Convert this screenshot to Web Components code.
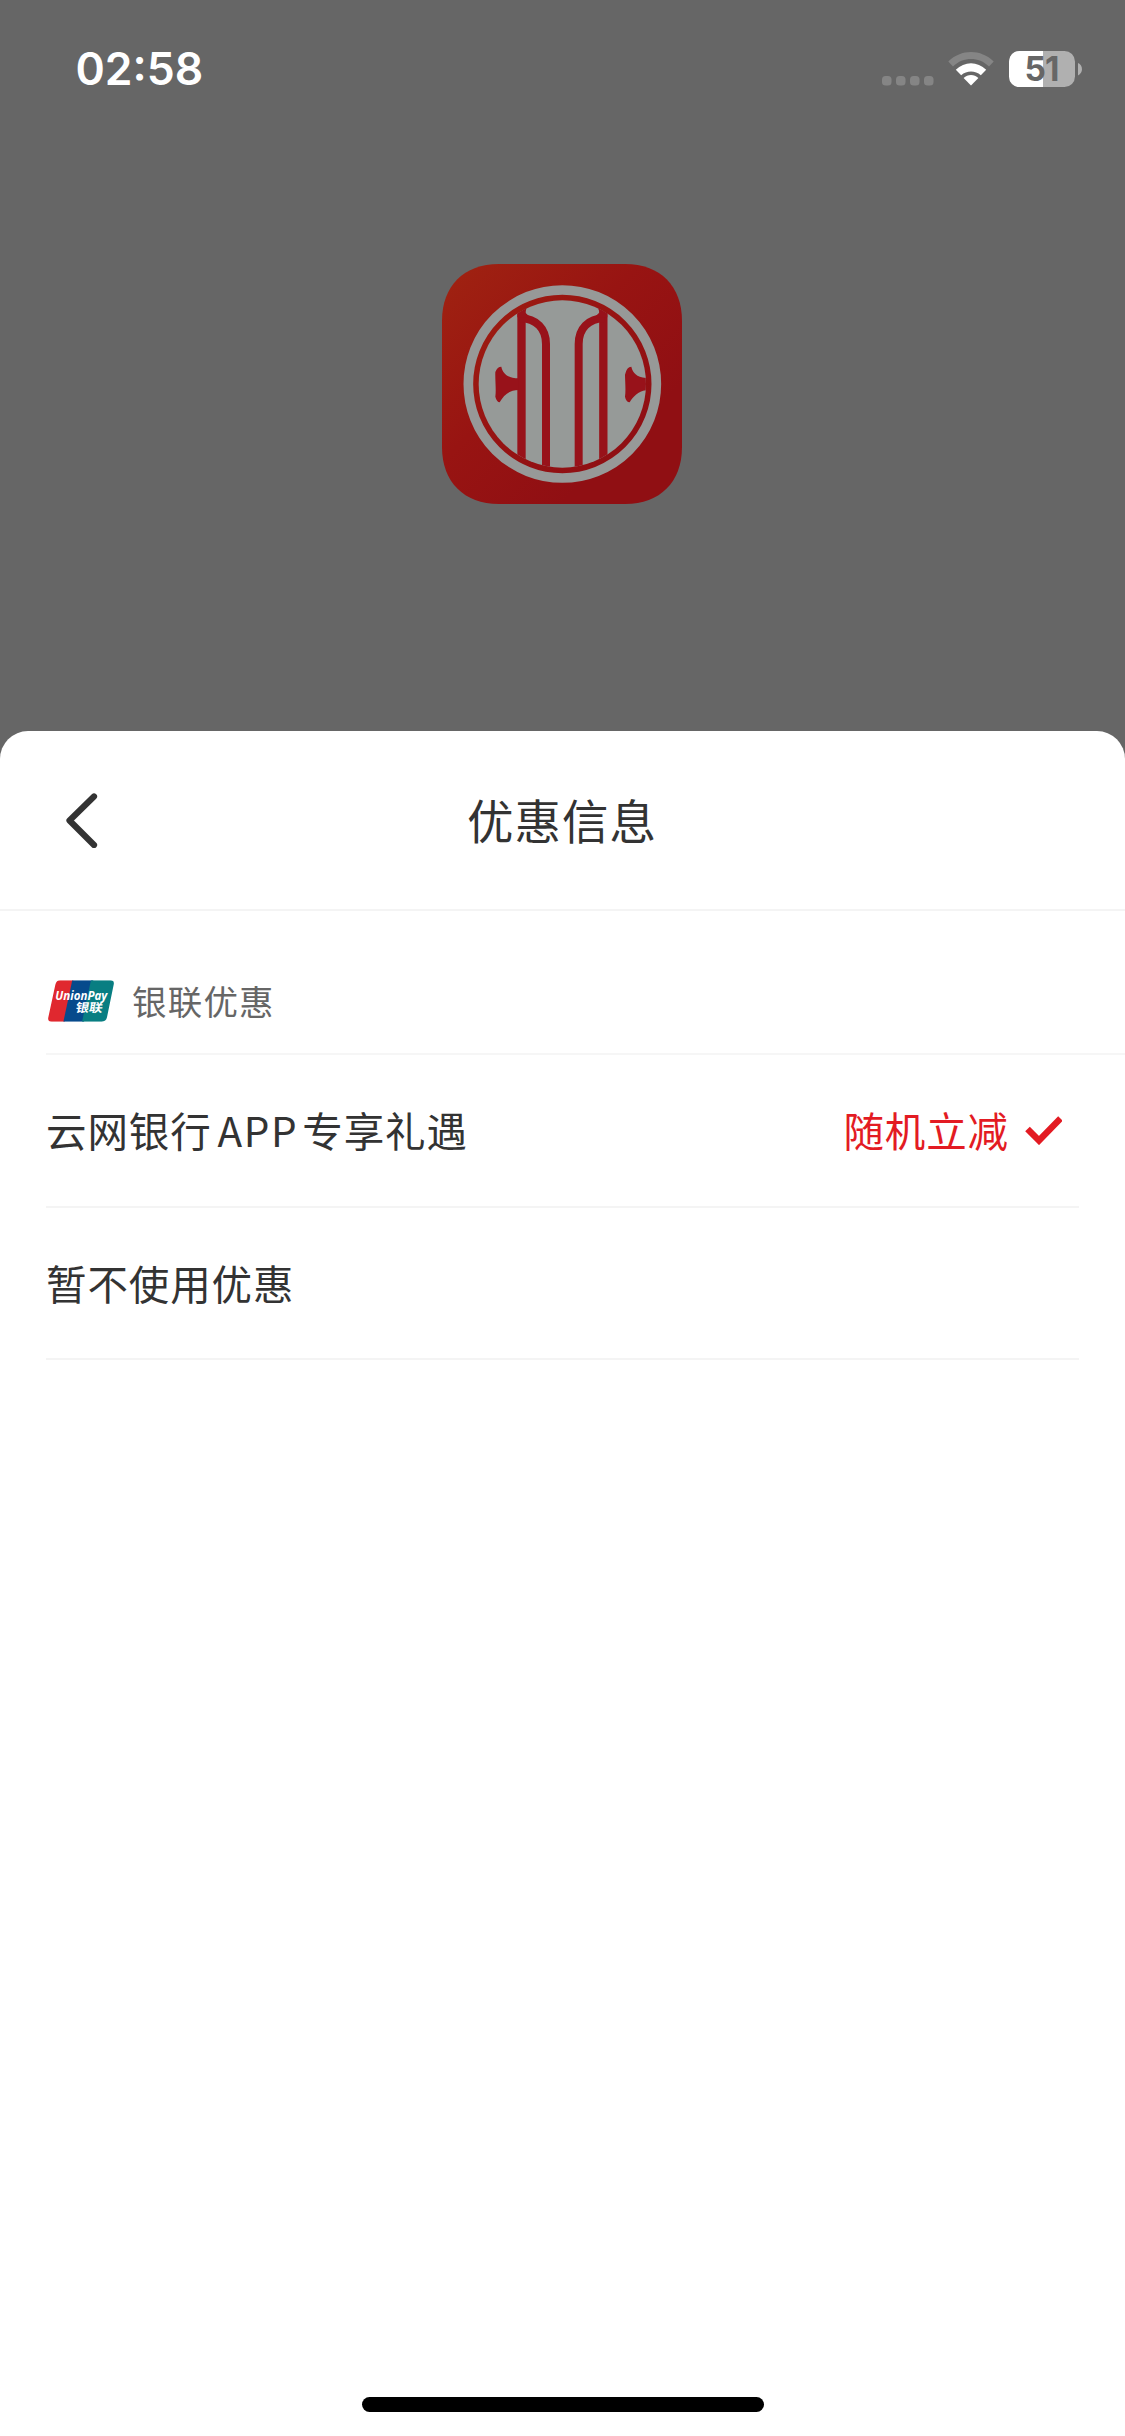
<!DOCTYPE html>
<html lang="zh-CN">
<head>
<meta charset="UTF-8">
<title>优惠信息</title>
<style>
    body {
        margin: 0;
        background: #666;
        font-family: "Noto Sans CJK SC", sans-serif;
        color: #333;
    }
</style>
</head>
<body>
<pay-screen>
    <status-bar slot="top" time="02:58" battery="51"></status-bar>
    <bank-logo slot="top"></bank-logo>
    <bottom-sheet>
        <sheet-header>优惠信息</sheet-header>
        <offer-group>银联优惠</offer-group>
        <offer-row tag="随机立减" checked>云网银行<span style="margin: 0 4px 0 6px; letter-spacing: 1.6px">APP</span>专享礼遇</offer-row>
        <offer-row>暂不使用优惠</offer-row>
    </bottom-sheet>
</pay-screen>

<script>
class PayScreen extends HTMLElement {
    connectedCallback() {
        this.attachShadow({ mode: 'open' });
        this.shadowRoot.innerHTML = `
            <style>
                :host {
                    display: flex;
                    flex-direction: column;
                    width: 1125px;
                    height: 2436px;
                    overflow: hidden;
                    background: #666;
                }
                .backdrop {
                    display: flex;
                    flex-direction: column;
                    height: 731px;
                    flex: none;
                }
            </style>
            <div class="backdrop"><slot name="top"></slot></div>
            <slot></slot>
        `;
    }
}

class StatusBar extends HTMLElement {
    connectedCallback() {
        this.attachShadow({ mode: 'open' });
        this.shadowRoot.innerHTML = `
            <style>
                :host {
                    display: flex;
                    align-items: center;
                    justify-content: space-between;
                    box-sizing: border-box;
                    width: 100%;
                    height: 138px;
                    padding: 0 43px 0 75.5px;
                    font-family: Inter, "Liberation Sans", sans-serif;
                    color: #fff;
                }
                .time {
                    font-size: 44.5px;
                    font-weight: 600;
                }
                svg {
                    display: block;
                }
            </style>
            <span class="time">${this.getAttribute('time')}</span>
            <svg width="202" height="40" viewBox="880 49 202 40">
                <g fill="#858585">
                    <rect x="882" y="76" width="9.5" height="9.5" rx="3.5"/>
                    <rect x="896" y="76" width="9.5" height="9.5" rx="3.5"/>
                    <rect x="910" y="76" width="9.5" height="9.5" rx="3.5"/>
                    <rect x="924" y="76" width="9.5" height="9.5" rx="3.5"/>
                </g>
                <path d="M948.3 61.5C961 48.8 981 48.8 993.7 61.5L989 66.4C978.5 56.6 963.5 56.6 953 66.4Z" fill="#858585"/>
                <path d="M955.8 69.8C964.5 61 977.5 61 986.2 69.8L980.8 75.2C975.3 70.2 966.7 70.2 961.2 75.2Z" fill="#fff"/>
                <path d="M963.6 78C967.8 74 974.2 74 978.4 78L971 85.4Z" fill="#fff"/>
                <clipPath id="level"><rect x="1009" y="51" width="34" height="36"/></clipPath>
                <rect x="1009" y="51" width="66" height="36" rx="10.5" fill="#b0b0b0"/>
                <rect x="1009" y="51" width="66" height="36" rx="10.5" fill="#fff" clip-path="url(#level)"/>
                <path d="M1078 63C1083.3 65 1083.3 73 1078 75.5Z" fill="#b0b0b0"/>
                <text x="1041.5" y="81" text-anchor="middle" font-size="33.5" font-weight="700" letter-spacing="-1" fill="#666">${this.getAttribute('battery')}</text>
            </svg>
        `;
    }
}

class BankLogo extends HTMLElement {
    connectedCallback() {
        this.attachShadow({ mode: 'open' });
        this.shadowRoot.innerHTML = `
            <style>
                :host {
                    display: block;
                    width: 240px;
                    height: 240px;
                    margin: 126px 0 0 442px;
                }
                svg {
                    display: block;
                }
            </style>
            <svg width="240" height="240" viewBox="36 42 720 720">
                <defs>
                    <linearGradient id="red" x1="0" y1="0" x2="0.75" y2="0.75">
                        <stop offset="0" stop-color="#a02311"/>
                        <stop offset="0.55" stop-color="#981412"/>
                        <stop offset="1" stop-color="#900f13"/>
                    </linearGradient>
                    <clipPath id="disc"><circle cx="397" cy="402" r="251"/></clipPath>
                </defs>
                <path d="M206 42H586C690 42 756 108 756 212V592C756 696 690 762 586 762H206C102 762 36 696 36 592V212C36 108 102 42 206 42Z" fill="url(#red)"/>
                <circle cx="397" cy="402" r="282" fill="none" stroke="#979998" stroke-width="29"/>
                <circle cx="397" cy="402" r="251" fill="#969a98"/>
                <g clip-path="url(#disc)">
                    <path d="M274.5 130V670M520 130V670" fill="none" stroke="#98121a" stroke-width="25"/>
                    <path d="M270 204C320 206 348 236 348 282V670M524 204C474 206 446 236 446 282V670" fill="none" stroke="#98121a" stroke-width="24"/>
                    <path d="M262 170H292L285 187L300 202H262ZM532 170H502L509 187L494 202H532Z" fill="#98121a"/>
                    <path d="M196 366Q202 350 214 350C218 370 232 384 266 385V420C236 420 222 436 209 457Q200 456 196 440C199 420 195 390 196 366Z" fill="#98121a"/>
                    <path d="M585 374Q590 350 604 350C609 371 622 384 660 385V420C628 420 612 436 599 457Q588 456 585 440C588 420 585 390 585 374Z" fill="#98121a"/>
                </g>
            </svg>
        `;
    }
}

class BottomSheet extends HTMLElement {
    connectedCallback() {
        this.attachShadow({ mode: 'open' });
        this.shadowRoot.innerHTML = `
            <style>
                :host {
                    display: flex;
                    flex-direction: column;
                    flex: 1;
                    border-radius: 28px 28px 0 0;
                    background: #fff;
                }
                .home {
                    width: 402px;
                    height: 15px;
                    margin: auto auto 24px;
                    border-radius: 8px;
                    background: #000;
                }
            </style>
            <slot></slot>
            <div class="home"></div>
        `;
    }
}

class SheetHeader extends HTMLElement {
    connectedCallback() {
        this.attachShadow({ mode: 'open' });
        this.shadowRoot.innerHTML = `
            <style>
                :host {
                    display: grid;
                    grid-template-columns: 1fr auto 1fr;
                    align-items: center;
                    box-sizing: border-box;
                    height: 180px;
                    border-bottom: 2px solid #f4f4f4;
                    font-size: 46.5px;
                    line-height: 68px;
                    letter-spacing: 1px;
                }
                svg {
                    display: block;
                    margin-left: 63.5px;
                }
                span {
                    padding: 0 1px 3px 0;
                }
            </style>
            <svg width="36" height="56" viewBox="64 792 36 56">
                <path d="M94 796.5L69.5 820.5L94 845" fill="none" stroke="#333" stroke-width="6.2" stroke-linecap="round" stroke-linejoin="round"/>
            </svg>
            <span><slot></slot></span>
        `;
    }
}

class OfferGroup extends HTMLElement {
    connectedCallback() {
        this.attachShadow({ mode: 'open' });
        this.shadowRoot.innerHTML = `
            <style>
                :host {
                    display: flex;
                    align-items: center;
                    gap: 18px;
                    box-sizing: border-box;
                    height: 144px;
                    margin-left: 46px;
                    padding: 38px 0 0 2px;
                    border-bottom: 2px solid #f6f6f6;
                    font-size: 34.5px;
                    line-height: 50px;
                    letter-spacing: 1.2px;
                    color: #666;
                }
                svg {
                    display: block;
                }
                span {
                    padding-bottom: 3px;
                }
            </style>
            <svg width="66" height="42" viewBox="54 62 198 126">
                <clipPath id="card"><path d="M91 63H241Q254 63 251 76L231 174Q228 187 215 187H65Q52 187 55 174L76 76Q79 63 91 63Z"/></clipPath>
                <g clip-path="url(#card)">
                    <path d="M54 62H130L104 188H54Z" fill="#e0282f"/>
                    <path d="M127 62H190L162 188H100Z" fill="#064a8c"/>
                    <path d="M183 62H252V188H156Z" fill="#087e82"/>
                </g>
                <text x="76" y="121" textLength="156" lengthAdjust="spacingAndGlyphs" font-family="Open Sans, sans-serif" font-size="37" font-weight="700" font-style="italic" letter-spacing="0" fill="#fff">UnionPay</text>
                <text transform="translate(135 158) skewX(-10)" textLength="81" lengthAdjust="spacingAndGlyphs" font-size="36" font-weight="700" letter-spacing="0" fill="#fff">银联</text>
            </svg>
            <span><slot></slot></span>
        `;
    }
}

class OfferRow extends HTMLElement {
    connectedCallback() {
        const tag = this.getAttribute('tag');
        const check = `
            <svg width="38" height="30" viewBox="1023 1116 38 30">
                <path d="M1026.5 1130L1038 1141.5L1059.5 1119.5" fill="none" stroke="#e31b23" stroke-width="6.5"/>
            </svg>
        `;
        this.attachShadow({ mode: 'open' });
        this.shadowRoot.innerHTML = `
            <style>
                :host {
                    display: flex;
                    align-items: center;
                    justify-content: space-between;
                    box-sizing: border-box;
                    height: 152.5px;
                    margin: 0 46px;
                    padding: 0 17px 0 0;
                    border-bottom: 2px solid #f4f4f4;
                    font-size: 40.5px;
                    line-height: 60px;
                    letter-spacing: 0.9px;
                }
                .tag {
                    display: flex;
                    align-items: center;
                    gap: 15px;
                    color: #e31b23;
                }
                svg {
                    display: block;
                }
            </style>
            <span><slot></slot></span>
            ${tag ? `<div class="tag"><span>${tag}</span>${this.hasAttribute('checked') ? check : ''}</div>` : ''}
        `;
    }
}

customElements.define('pay-screen', PayScreen);
customElements.define('status-bar', StatusBar);
customElements.define('bank-logo', BankLogo);
customElements.define('bottom-sheet', BottomSheet);
customElements.define('sheet-header', SheetHeader);
customElements.define('offer-group', OfferGroup);
customElements.define('offer-row', OfferRow);
</script>
</body>
</html>
